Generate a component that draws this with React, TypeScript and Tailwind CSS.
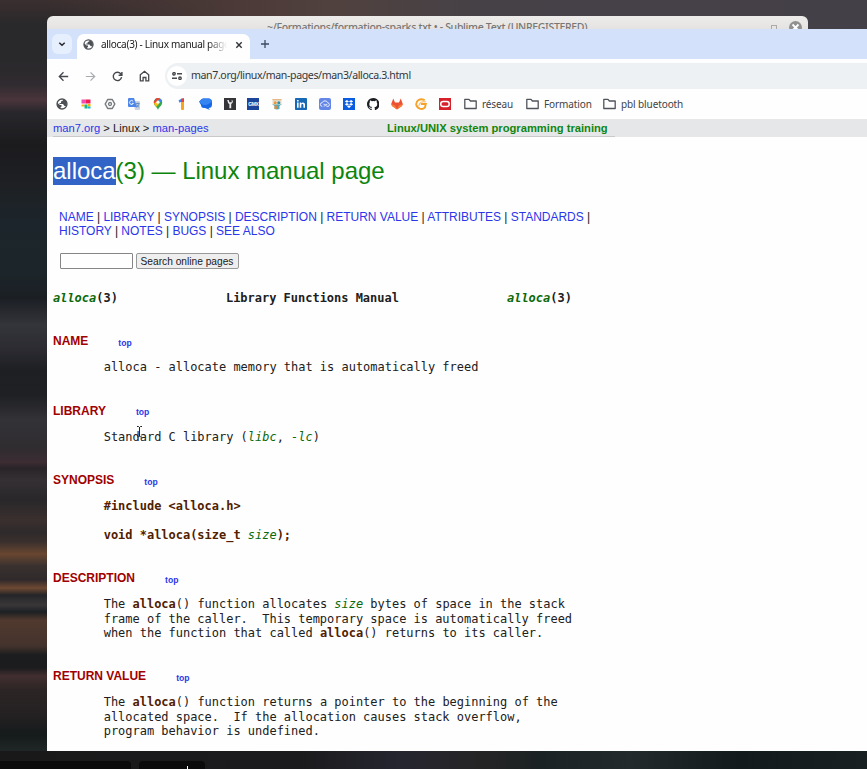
import React from "react";

const L = ({ children }: { children: React.ReactNode }) => <span className="text-[#2a36ea]">{children}</span>;
const B = ({ children }: { children: React.ReactNode }) => <b className="font-bold text-[#502000]">{children}</b>;
const I = ({ children }: { children: React.ReactNode }) => <i className="italic text-[#0a6a0a]">{children}</i>;

const Globe = ({ size = 12 }: { size?: number }) => (
  <svg width={size} height={size} viewBox="0 0 24 24" className="shrink-0">
    <circle cx="12" cy="12" r="10" fill="#fff" stroke="#4d5156" strokeWidth="2.6" />
    <path d="M2 9l6 5h3v3l-2 2v3C4 20 2 16 2 9zM14 2v3l-4 2v3H7v2h7l3 4h4c2-5 0-12-7-14z" fill="#4d5156" />
  </svg>
);

const Folder = ({ label, className }: { label: string; className: string }) => (
  <div className={"flex items-center gap-[5px] " + className}>
    <svg width="13" height="12" viewBox="0 0 13 12" fill="none" stroke="#50545a" strokeWidth="1.3" strokeLinejoin="round">
      <path d="M.8 1.3V10.5H12.2V3H6.4L5 1.3H.8z" />
    </svg>
    <span className="whitespace-nowrap">{label}</span>
  </div>
);

const icons: React.ReactNode[] = [
  <Globe />,
  <svg width="12" height="12" viewBox="0 0 12 12">
    <path d="M1.5 1.5h4v4h-4z" fill="#f04fb0" /><path d="M5.5 1.5h5v4h-5z" fill="#f21b55" /><path d="M1.5 6.5h3v2h-3z" fill="#ffb600" /><path d="M4.5 6.5h3v4h-3z" fill="#14b88a" /><path d="M7.8 6h2.7v2.5H7.8z" fill="#ffb400" /><path d="M7.8 8.5h2.7v2H7.8z" fill="#14b8d0" />
  </svg>,
  <svg width="12" height="12" viewBox="0 0 12 12" fill="none" stroke="#777a7e">
    <path d="M3.7 1.5h4.6L10.8 6l-2.5 4.5H3.7L1.2 6z" strokeWidth="1.5" strokeLinejoin="round" /><circle cx="6" cy="6" r="1.5" strokeWidth="1.3" />
  </svg>,
  <svg width="12" height="12" viewBox="0 0 12 12">
    <path d="M5 3h6a1 1 0 011 1v7a1 1 0 01-1 1H7z" fill="#cbd4df" /><path d="M1 0h5l3 9H1a1 1 0 01-1-1V1a1 1 0 011-1z" fill="#4d86e8" />
    <path d="M5.2 3.3A2 2 0 105.4 5.3H3.8" stroke="#fff" fill="none" strokeWidth=".9" /><path d="M8 5.5h3.5M9.7 4.7v.8M8.5 9.5c1.5-1 2.2-2 2.4-4M8.6 6.4l2.2 3" stroke="#5782bb" strokeWidth=".8" fill="none" />
  </svg>,
  <svg width="12" height="12" viewBox="0 0 12 12">
    <path d="M6 0a4.2 4.2 0 014.2 4.2C10.2 8 7 8.5 6 12 5 8.5 1.8 8 1.8 4.2A4.2 4.2 0 016 0z" fill="#31a852" />
    <path d="M3 1.3A4.2 4.2 0 018 .5L3 6z" fill="#e94335" /><path d="M2.2 2.2L4.5 4 2.3 6.3A4 4 0 012.2 2.2z" fill="#e94335" /><path d="M8 .5A4.2 4.2 0 0110 3L7 5 6 3z" fill="#4285f4" /><path d="M2 5.5L4.7 3.5 7 6 4 9z" fill="#fbbc04" /><circle cx="6" cy="4.2" r="1.6" fill="#fff" />
  </svg>,
  <svg width="12" height="12" viewBox="0 0 12 12">
    <path d="M5 3.5h3V11a1 1 0 01-1 1H6a1 1 0 01-1-1z" fill="#f7a51c" /><path d="M2.5 2.5L6.5 0v3L3.5 4.7z" fill="#4084ed" /><path d="M5 1L8 0v4H5z" fill="#e94335" />
  </svg>,
  <svg width="13" height="12" viewBox="0 0 13 12">
    <path d="M4 .5h5.5a3.5 3.5 0 013.5 4v2A3.5 3.5 0 019.5 10L11 12 6 10H5C3 10 2 9 2 7L0 3.5C1 3.5 2 .5 4 .5z" fill="#1768e5" /><path d="M4 .5h5.5a3.5 3.5 0 013.4 3.4C10 5 9 7 6 7S2 5.5.5 3.5z" fill="#3683f2" />
  </svg>,
  <svg width="12" height="12" viewBox="0 0 12 12">
    <path d="M0 0h12v12H0z" fill="#353438" /><path d="M3.2 2l1 3.2 1.2.8v4.2h1.8V6C9 5 9.2 3.5 8.4 2.3L7.7 1.8v2.5H5.5L4.7 1.9z" fill="#eee" />
  </svg>,
  <div className="flex h-3 w-3 items-center justify-center overflow-hidden bg-[#1c449b] font-['Liberation_Sans',sans-serif] text-[5px] leading-none font-bold tracking-[-.4px] text-white">GMX</div>,
  <svg width="12" height="12" viewBox="0 0 12 12">
    <path d="M1.5 1h9v6h-9z" fill="#e4ddcb" /><path d="M1.5 1h9v1.2h-9z" fill="#e8b781" /><circle cx="4.2" cy="4.8" r="1.5" fill="#e89642" /><circle cx="7.8" cy="4.8" r="1.5" fill="#2d92b0" /><path d="M1 6c2 1 3.500.6 5 .5 1.500.1 3 .5 5-.5L8.500 8v3L6 11.500 3.500 11V8z" fill="#4daac0" /><path d="M3.500 7.500h2.300V11h-2.300z" fill="#e88a35" />
  </svg>,
  <svg width="12" height="12" viewBox="0 0 12 12">
    <rect width="12" height="12" rx=".8" fill="#1769b5" /><path d="M2 4.600h1.600v5.200H2zM2 2h1.600v1.600H2zM4.700 4.600h1.500v.8C7.300 4 10 4.200 10 6.800v3H8.400V7c0-1.500-2.100-1.500-2.100 0v2.800H4.700z" fill="#fff" />
  </svg>,
  <svg width="12" height="12" viewBox="0 0 12 12">
    <rect width="12" height="12" rx="2" fill="#6486e6" /><path d="M3.200 8.300a1.800 1.800 0 010-3.600A3 3 0 018.800 4.800a1.900 1.900 0 01.2 3.700C7 8.500 6.200 6 4.500 6.200m.2 2C6 8.200 6.500 6 8.300 6.300" fill="none" stroke="#e9efff" strokeWidth="1" />
  </svg>,
  <svg width="12" height="12" viewBox="0 0 12 12">
    <path d="M0 0h12v12H0z" fill="#0a5de0" /><path d="M3.900 2L6 3.400 3.900 4.800 1.800 3.400zM8.100 2l2.100 1.400L8.100 4.800 6 3.400zM3.900 4.900L6 6.300 3.900 7.700 1.800 6.300zM8.100 4.900l2.100 1.400-2.100 1.400L6 6.300zM6 7.200l2 1.400L6 10 4 8.600z" fill="#fff" />
  </svg>,
  <svg width="12.500" height="12.500" viewBox="0 0 16 16">
    <path d="M8 0C3.580 0 0 3.580 0 8c0 3.540 2.290 6.530 5.470 7.590.4.070.55-.17.55-.38v-1.490c-2.010.37-2.530-.49-2.690-.94-.09-.23-.48-.94-.82-1.130-.28-.15-.68-.52-.01-.53.63-.01 1.080.58 1.230.82.72 1.210 1.870.87 2.330.66.07-.52.28-.87.51-1.070-1.780-.2-3.640-.89-3.640-3.950 0-.87.31-1.590.82-2.150-.08-.2-.36-1.020.08-2.120 0 0 .67-.21 2.200.82a7.600 7.600 0 014 0c1.530-1.040 2.200-.82 2.200-.82.44 1.100.16 1.920.08 2.120.51.56.82 1.270.82 2.150 0 3.070-1.870 3.750-3.650 3.950.29.25.54.73.54 1.480v2.200c0 .21.15.46.55.38A8 8 0 0016 8c0-4.420-3.580-8-8-8z" fill="#1b1f23" />
  </svg>,
  <svg width="12" height="12" viewBox="0 0 12 12">
    <path d="M2.300.6L4 4.500h4L9.700.6 11.800 6 11 8 6 11.600 1 8 .2 6z" fill="#ec5131" /><path d="M.3 6L4 7.500 6 11.600 1 8zM11.700 6L8 7.500 6 11.600 11 8z" fill="#f4813b" />
  </svg>,
  <svg width="12" height="12" viewBox="0 0 12 12" fill="none" strokeLinecap="round">
    <path d="M9 1.800C5 0 1 2.700 1.200 6.400 1.800 10.500 7 12.500 10 9.300L10.800 6H6.600" stroke="#f6a128" strokeWidth="1.900" /><path d="M10.500 3.800C7 3 4.500 4.700 4 7.500" stroke="#f8c47b" strokeWidth="1.200" />
  </svg>,
  <svg width="12" height="12" viewBox="0 0 12 12">
    <path d="M0 0h12v12H0z" fill="#d6202a" /><rect x="1.800" y="3.500" width="8.400" height="5" rx="2.300" fill="none" stroke="#fff" strokeWidth="1.500" />
  </svg>,
];

const Section = ({ title, children }: { title: string; children: React.ReactNode }) => (
  <section className="mb-[29.25px]">
    <h2 className="flex h-[14px] items-center gap-[30px] font-['Liberation_Sans',sans-serif] text-[12px] font-bold text-[#a00000]">
      {title}
      <span className="pt-[3px] text-[8.6px] text-[#2a36ea]">top</span>
    </h2>
    <pre className="mt-3 ml-[50.7px] font-['DejaVu_Sans_Mono',monospace] text-[11.97px] leading-[14.25px]">{children}</pre>
  </section>
);

export default function App() {
  return (
    <div className="relative h-[769px] w-[867px] overflow-hidden bg-[linear-gradient(180deg,#3b2f30_0,#29282a_25px,#29282b_60px,#302b30_85px,#4a353b_100px,#28272b_112px,#1b1b1e_145px,#1e2023_185px,#1c252b_220px,#1c262a_270px,#1b1f24_298px,#34343b_325px,#2b2b31_350px,#1e1f23_370px,#1f2023_395px,#323237_420px,#302c30_450px,#3c2d33_462px,#292428_468px,#353034_480px,#29272a_500px,#3a302e_520px,#2e2a2b_532px,#3a302d_542px,#694630_554px,#39312f_566px,#30292b_580px,#6e4932_588px,#242528_595px,#3a3738_605px,#1c2023_612px,#50392e_620px,#44332d_646px,#1b1d1e_655px,#1c1c1e_668px,#412e30_676px,#2c2525_690px,#242122_715px,#151a1b_735px,#202526_750px,#191a1b_769px)] font-['Liberation_Sans',sans-serif] text-[#202020]">
      <div className="absolute top-0 right-0 h-[60px] w-[820px] bg-[linear-gradient(90deg,transparent,#4a3936_180px,#51413e_280px,#464147_430px,#444047)]" />
      <div className="absolute bottom-0 left-0 h-[18px] w-full bg-[linear-gradient(90deg,#19191a,#1b1b1d_300px,#252530_400px,#252425_480px,#1b2223_540px,#222a2c_630px,#131a1b_740px,#182022)]" />

      <div className="absolute top-[16px] left-[47px] h-[30px] w-[761px] rounded-t-[6px] bg-gradient-to-b from-[#eeecea] to-[#dad8d6]">
        <span className="absolute top-[5px] left-[220px] font-['Noto_Sans',sans-serif] text-[10.5px] leading-[13px] font-medium tracking-[-.32px] whitespace-nowrap text-[#777]">~/Formations/formation-sparks.txt • - Sublime Text (UNREGISTERED)</span>
        <i className="absolute top-[9px] left-[724px] h-[8px] w-[6px] border border-[#aaa]" />
        <svg className="absolute top-[5px] left-[742px]" width="13" height="13" viewBox="0 0 13 13"><circle cx="6.5" cy="6.5" r="6.5" fill="#919191" /><path d="M3.5 3.5l6 6m0-6l-6 6" stroke="#fff" strokeWidth="1.8" /></svg>
      </div>

      <main className="absolute top-[29px] left-[47px] flex h-[722px] w-[820px] flex-col overflow-hidden bg-[#fefefe]">
        <div className="flex h-[30px] shrink-0 bg-[#d3e1fb] pl-[5px] font-['Noto_Sans',sans-serif]">
          <div className="mt-[5px] flex h-[20px] w-[20px] items-center justify-center rounded-[6px] bg-[#e6effd]">
            <svg width="8" height="8" viewBox="0 0 8 8" fill="none" stroke="#25282c" strokeWidth="1.5"><path d="M1.3 2.7L4 5.3l2.7-2.6" /></svg>
          </div>
          <div className="mt-[5px] ml-[5px] flex h-[25px] w-[173px] items-center rounded-t-[7px] bg-[#fefefe] pr-[7px] pb-[4px] pl-[6px]">
            <Globe size={11} />
            <span className="ml-[7px] w-[126px] overflow-hidden text-[10px] tracking-[-.3px] whitespace-nowrap [mask-image:linear-gradient(90deg,#000_85%,transparent)]">alloca(3) - Linux manual page</span>
            <svg className="ml-auto" width="8" height="8" viewBox="0 0 8 8" stroke="#303338" strokeWidth="1.4"><path d="M1.3 1.3l5.4 5.4m0-5.4L1.3 6.700" /></svg>
          </div>
          <svg className="mt-[10px] ml-[10px]" width="10" height="10" viewBox="0 0 10 10" stroke="#3d4b62" strokeWidth="1.3"><path d="M5 1v8M1 5h8" /></svg>
        </div>

        <div className="flex h-[34px] shrink-0 items-center pl-[11px] font-['Noto_Sans',sans-serif]">
          <svg width="11" height="11" viewBox="0 0 11 11" fill="none" stroke="#44474b" strokeWidth="1.3"><path d="M10.2 5.5H1.5M5.5 1.3L1.3 5.5l4.2 4.2" /></svg>
          <svg className="ml-[16px]" width="11" height="11" viewBox="0 0 11 11" fill="none" stroke="#a9abad" strokeWidth="1.2"><path d="M.8 5.5h8.7M5.5 1.3l4.2 4.2-4.2 4.2" /></svg>
          <svg className="ml-[16px]" width="11" height="11" viewBox="0 0 11 11" fill="none" stroke="#44474b" strokeWidth="1.4"><path d="M9.6 6.2A4.2 4.2 0 118.7 2.7L9.8 4M9.9 1v3.3H6.6" /></svg>
          <svg className="ml-[16px]" width="11" height="12" viewBox="0 0 11 12" fill="none" stroke="#44474b" strokeWidth="1.3"><path d="M1.3 4.8v6h2.800V7.500h2.800v3.300h2.800v-6L5.500 1.300z" /></svg>
          <div className="ml-[15px] flex h-[26px] flex-1 items-center rounded-l-full bg-[#edf1f4] pl-[2px]">
            <div className="flex h-[20px] w-[20px] items-center justify-center rounded-full bg-white">
              <svg width="10" height="8" viewBox="0 0 10 8" fill="none" stroke="#44474b" strokeWidth="1.4"><path d="M5 1.700H10M0 6.300h5" /><circle cx="2" cy="1.800" r="1.200" /><circle cx="8" cy="6.200" r="1.200" /></svg>
            </div>
            <span className="ml-[4px] text-[10.6px] tracking-[-.385px] whitespace-nowrap text-[#33363a]">man7.org/linux/man-pages/man3/alloca.3.html</span>
          </div>
        </div>

        <div className="flex h-[26px] shrink-0 items-center pb-[4px] pl-[3px] font-['Noto_Sans',sans-serif] text-[10px] tracking-[-.1px] text-[#404347]">
          {icons.map((icon, i) => <div key={i} className="flex w-[23.95px] shrink-0 items-center justify-center">{icon}</div>)}
          <Folder label="réseau" className="ml-[7px] w-[62px]" />
          <Folder label="Formation" className="w-[77px]" />
          <Folder label="pbl bluetooth" className="" />
        </div>

        <div className="h-[18px] shrink-0 bg-[#e6e7e8] pl-[6px] text-[11.2px]">
          <div className="flex h-[18px] w-[562px] items-center border-b border-[#c9c9c9] pt-[2px]">
            <span className="w-[334px] shrink-0 whitespace-nowrap"><L>man7.org</L> &gt; Linux &gt; <L>man-pages</L></span>
            <b className="whitespace-nowrap text-[#108510]">Linux/UNIX system programming training</b>
          </div>
        </div>

        <div className="pl-[6px]">
          <h1 className="mt-[20px] h-[28px] text-[24px] leading-[28px] tracking-[-.02px] text-[#0c850c]"><span className="inline-block bg-[#3264c8] text-white">alloca</span>(3) — Linux manual page</h1>
          <div className="mt-[26px] ml-[6px] text-[12px] leading-[13.6px] tracking-[-.013px] whitespace-nowrap">
            <p><L>NAME</L> | <L>LIBRARY</L> | <L>SYNOPSIS</L> | <L>DESCRIPTION</L> | <L>RETURN VALUE</L> | <L>ATTRIBUTES</L> | <L>STANDARDS</L> |</p>
            <p><L>HISTORY</L> | <L>NOTES</L> | <L>BUGS</L> | <L>SEE ALSO</L></p>
          </div>
          <div className="mt-[15px] ml-[6.5px] flex h-[16px] gap-[3px]">
            <div className="w-[73px] rounded-[1px] border border-[#858585]" />
            <div className="flex w-[103px] items-center justify-center rounded-[2px] border border-[#999] bg-[#eeeeef] text-[10.2px] whitespace-nowrap">Search online pages</div>
          </div>
          <pre className="mt-[22px] mb-[29px] font-['DejaVu_Sans_Mono',monospace] text-[11.97px] leading-[14.25px] font-bold"><I>alloca</I>(3)               Library Functions Manual               <I>alloca</I>(3)</pre>
          <Section title="NAME">alloca - allocate memory that is automatically freed</Section>
          <Section title="LIBRARY">Standard C library (<I>libc</I>, <I>-lc</I>)</Section>
          <Section title="SYNOPSIS"><B>{"#include <alloca.h>\n\nvoid *alloca(size_t "}</B><I>size</I><B>);</B></Section>
          <Section title="DESCRIPTION">The <B>alloca</B>() function allocates <I>size</I>{" bytes of space in the stack\nframe of the caller.  This temporary space is automatically freed\nwhen the function that called "}<B>alloca</B>() returns to its caller.</Section>
          <Section title="RETURN VALUE">The <B>alloca</B>{"() function returns a pointer to the beginning of the\nallocated space.  If the allocation causes stack overflow,\nprogram behavior is undefined."}</Section>
        </div>
      </main>

      <svg className="absolute top-[425px] left-[136px]" width="7" height="14" viewBox="0 0 7 14" fill="none" stroke="#222" strokeWidth="1"><path d="M1 1.500h1.500l1 1 1-1H6M3.500 2v9M1 12h1.500l1-1 1 1H6" /></svg>
      <div className="absolute bottom-0 left-0 h-[8px] w-[131px] rounded-tr-[4px] bg-[#0b0b0c]" />
      <div className="absolute bottom-0 left-[139px] h-[8px] w-[66px] rounded-t-[4px] bg-[#0b0b0c]"><i className="absolute bottom-0 left-[48px] h-[3px] w-px bg-white" /></div>
    </div>
  );
}
